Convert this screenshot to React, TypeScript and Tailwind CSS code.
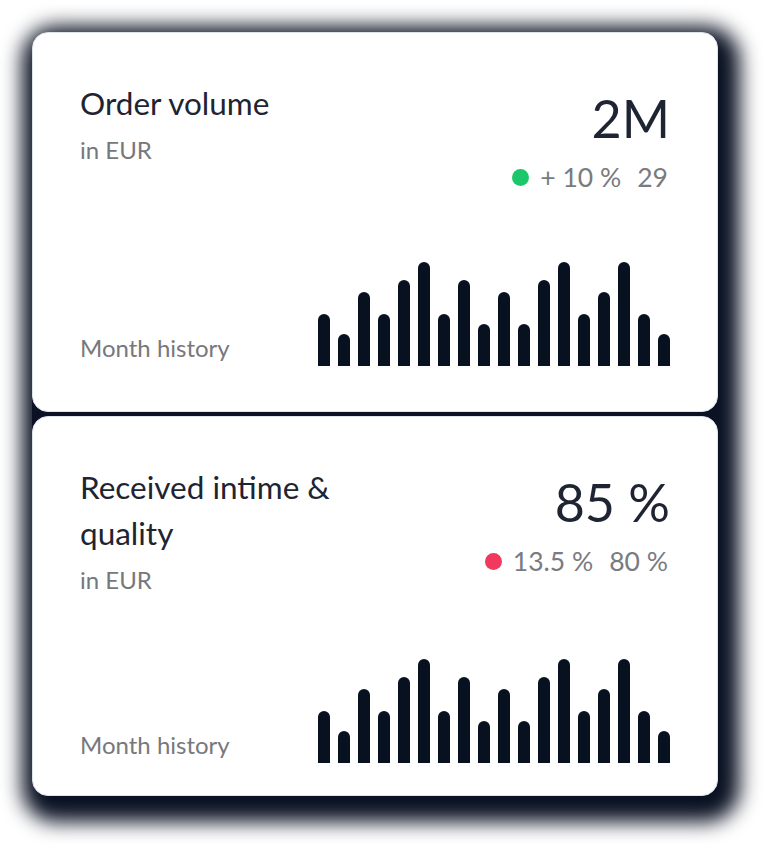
import React from "react";

const bars = [52, 32, 74, 52, 86, 104, 52, 86, 42, 74, 42, 86, 104, 52, 74, 104, 52, 32];

function Bars() {
  return (
    <div className="flex items-end gap-[8px]">
      {bars.map((h, i) => (
        <div
          key={i}
          className="w-[12px] rounded-t-full bg-[#07111f]"
          style={{ height: h }}
        />
      ))}
    </div>
  );
}

function StatCard({
  title,
  value,
  change,
  extra,
  dot,
  bottomPad,
}: {
  title: React.ReactNode;
  value: string;
  change: string;
  extra: string;
  dot: string;
  bottomPad: string;
}) {
  return (
    <div
      className={`h-[380px] bg-white rounded-[16px] border border-[#dde3ec] px-[47px] pt-[47px] flex flex-col ${bottomPad}`}
    >
      {/* Header */}
      <div className="flex justify-between items-start">
        <div>
          <h2 className="text-[31.5px] leading-[46px] text-[#1e2432] font-normal">{title}</h2>
          <p className="mt-2 text-[24px] leading-[32px] text-[#77787c]">in EUR</p>
        </div>
        <div className="flex flex-col items-end">
          <div className="mt-[12px] text-[52px] leading-[52px] text-[#1e2432]">{value}</div>
          <div className="mt-[17px] mr-[2px] flex items-center text-[26.5px] leading-[32px] text-[#7a7b7f]">
            <span className={`w-[17px] h-[17px] rounded-full mr-[11px] ${dot}`} />
            <span>{change}</span>
            <span className="ml-[16px]">{extra}</span>
          </div>
        </div>
      </div>

      {/* Chart */}
      <div className="mt-auto flex items-end justify-between">
        <span className="mb-[3px] text-[24px] leading-[30px] text-[#77787c]">Month history</span>
        <Bars />
      </div>
    </div>
  );
}

export default function App() {
  return (
    <div className="min-h-screen bg-white pt-[32px] font-['Lato',sans-serif]">
      <div className="ml-[32px] w-[686px] rounded-[18px] bg-[#0b1223] shadow-[6px_10px_20px_16px_#0b1223] flex flex-col gap-[4px]">
        <StatCard
          title="Order volume"
          value="2M"
          change="+ 10 %"
          extra="29"
          dot="bg-[#1cc66b]"
          bottomPad="pb-[45px]"
        />
        <StatCard
          title={
            <>
              Received intime &amp;
              <br />
              quality
            </>
          }
          value="85 %"
          change="13.5 %"
          extra="80 %"
          dot="bg-[#f2385f]"
          bottomPad="pb-[32px]"
        />
      </div>
    </div>
  );
}
